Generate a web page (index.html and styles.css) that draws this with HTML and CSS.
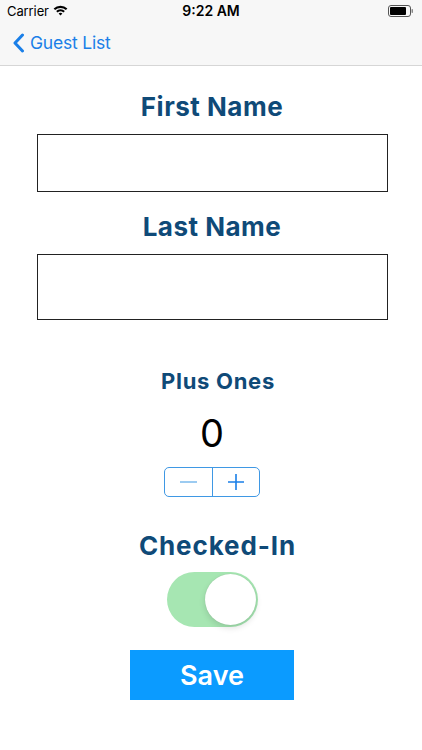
FILE: index.html
```html
<!DOCTYPE html>
<html>
<head>
<meta charset="utf-8">
<link rel="stylesheet" href="styles.css">
</head>
<body>
<div class="top">
  <div class="status">
    <div class="status-left">
      <span class="carrier">Carrier</span>
      <svg class="wifi" width="15" height="11" viewBox="0 0 15 11">
        <path d="M0.6 3.6 A10 10 0 0 1 14.4 3.6 L12.9 5.1 A8 8 0 0 0 2.1 5.1 Z" fill="#000"/>
        <path d="M3.1 6.1 A6.4 6.4 0 0 1 11.9 6.1 L10.4 7.6 A4.3 4.3 0 0 0 4.6 7.6 Z" fill="#000"/>
        <path d="M5.6 8.6 A2.7 2.7 0 0 1 9.4 8.6 L7.5 10.6 Z" fill="#000"/>
      </svg>
    </div>
    <div class="time">9:22 AM</div>
    <div class="status-right">
      <svg class="battery" width="26" height="12" viewBox="0 0 26 12">
        <rect x="0.5" y="0.5" width="22" height="11" rx="2.5" fill="none" stroke="#555" stroke-width="1"/>
        <rect x="2" y="2" width="16" height="8" rx="1" fill="#000"/>
        <rect x="23.5" y="4" width="1.5" height="4" rx="0.7" fill="#888"/>
      </svg>
    </div>
  </div>
  <div class="nav">
    <svg class="chevron" width="13" height="20" viewBox="0 0 13 20">
      <path d="M10.5 2 L3 10 L10.5 18" fill="none" stroke="#1a7fe8" stroke-width="3" stroke-linecap="round" stroke-linejoin="round"/>
    </svg>
    <span class="back">Guest List</span>
  </div>
</div>
<main class="form">
  <h1 class="label first-label">First Name</h1>
  <div class="field field-first"></div>
  <h1 class="label last-label">Last Name</h1>
  <div class="field field-last"></div>
  <h2 class="label small plus-label">Plus Ones</h2>
  <div class="count">0</div>
  <div class="stepper">
    <div class="step minus"><span class="minus-bar"></span></div>
    <div class="step plus">
      <svg width="18" height="18" viewBox="0 0 18 18"><path d="M9 1 V17 M1 9 H17" stroke="#1a7fe8" stroke-width="1.6"/></svg>
    </div>
  </div>
  <h1 class="label checked-label">Checked-In</h1>
  <div class="switch"><div class="knob"></div></div>
  <button class="save">Save</button>
</main>
</body>
</html>
```
FILE: styles.css
```css
html, body {
  margin: 0;
  padding: 0;
  background: #ffffff;
  font-family: Inter, "Noto Sans", "Liberation Sans", sans-serif;
}
.top {
  background: #f7f7f7;
  border-bottom: 1px solid #d6d6d6;
}
.status {
  height: 20px;
  display: flex;
  align-items: center;
  justify-content: space-between;
  padding: 0 8px 0 7px;
  position: relative;
}
.status-left {
  display: flex;
  align-items: center;
  gap: 4px;
  padding-top: 2px;
}
.carrier {
  font-size: 13px;
  color: #000;
  letter-spacing: -0.1px;
}
.wifi { margin-top: -1px; }
.time {
  position: absolute;
  left: 0;
  right: 0;
  top: 2px;
  text-align: center;
  font-size: 14px;
  font-weight: 600;
  color: #000;
}
.status-right {
  display: flex;
  align-items: center;
  padding-top: 2px;
}
.nav {
  height: 45px;
  display: flex;
  align-items: center;
  padding-left: 12px;
  gap: 5px;
}
.chevron { margin-top: 1px; }
.back {
  font-size: 17.5px;
  color: #1a7fe8;
  letter-spacing: -0.2px;
}
.form {
  display: flex;
  flex-direction: column;
  align-items: center;
  padding-left: 2px;
}
.label {
  margin: 0;
  font-size: 26px;
  line-height: 30px;
  font-weight: 700;
  color: #0f4a78;
  letter-spacing: 0.5px;
}
.small {
  font-size: 22px;
  line-height: 26px;
  letter-spacing: 0.7px;
}
.first-label { margin-top: 26px; }
.field {
  box-sizing: border-box;
  width: 351px;
  border: 1px solid #222;
  background: #fff;
}
.field-first { height: 58px; margin-top: 12px; }
.last-label { margin-top: 20px; }
.field-last { height: 66px; margin-top: 12px; }
.plus-label { margin-top: 48px; margin-left: 12px; }
.count {
  margin-top: 17px;
  font-size: 38px;
  line-height: 44px;
  font-weight: 400;
  color: #000;
}
.stepper {
  margin-top: 12px;
  box-sizing: border-box;
  width: 96px;
  height: 30px;
  border: 1px solid #3f98e4;
  border-radius: 5px;
  display: flex;
}
.step {
  flex: 1;
  display: flex;
  align-items: center;
  justify-content: center;
}
.minus { border-right: 1px solid #3f98e4; }
.minus-bar {
  width: 17px;
  height: 1.6px;
  background: #9ccbf1;
}
.checked-label { margin-top: 34px; margin-left: 11px; letter-spacing: 0.9px; }
.switch {
  margin-top: 11px;
  width: 91px;
  height: 55px;
  border-radius: 28px;
  background: #a6e6b2;
  display: flex;
  align-items: center;
  justify-content: flex-end;
  padding-right: 2px;
  box-sizing: border-box;
}
.knob {
  width: 51px;
  height: 51px;
  border-radius: 50%;
  background: #fff;
  box-shadow: 0 3px 6px rgba(0,0,0,0.12), 0 0 1px rgba(0,0,0,0.15);
}
.save {
  margin-top: 23px;
  width: 164px;
  height: 50px;
  border: none;
  background: #0b9bff;
  color: #fff;
  font-family: Inter, "Noto Sans", "Liberation Sans", sans-serif;
  font-size: 27px;
  font-weight: 600;
  padding: 0;
}
```
